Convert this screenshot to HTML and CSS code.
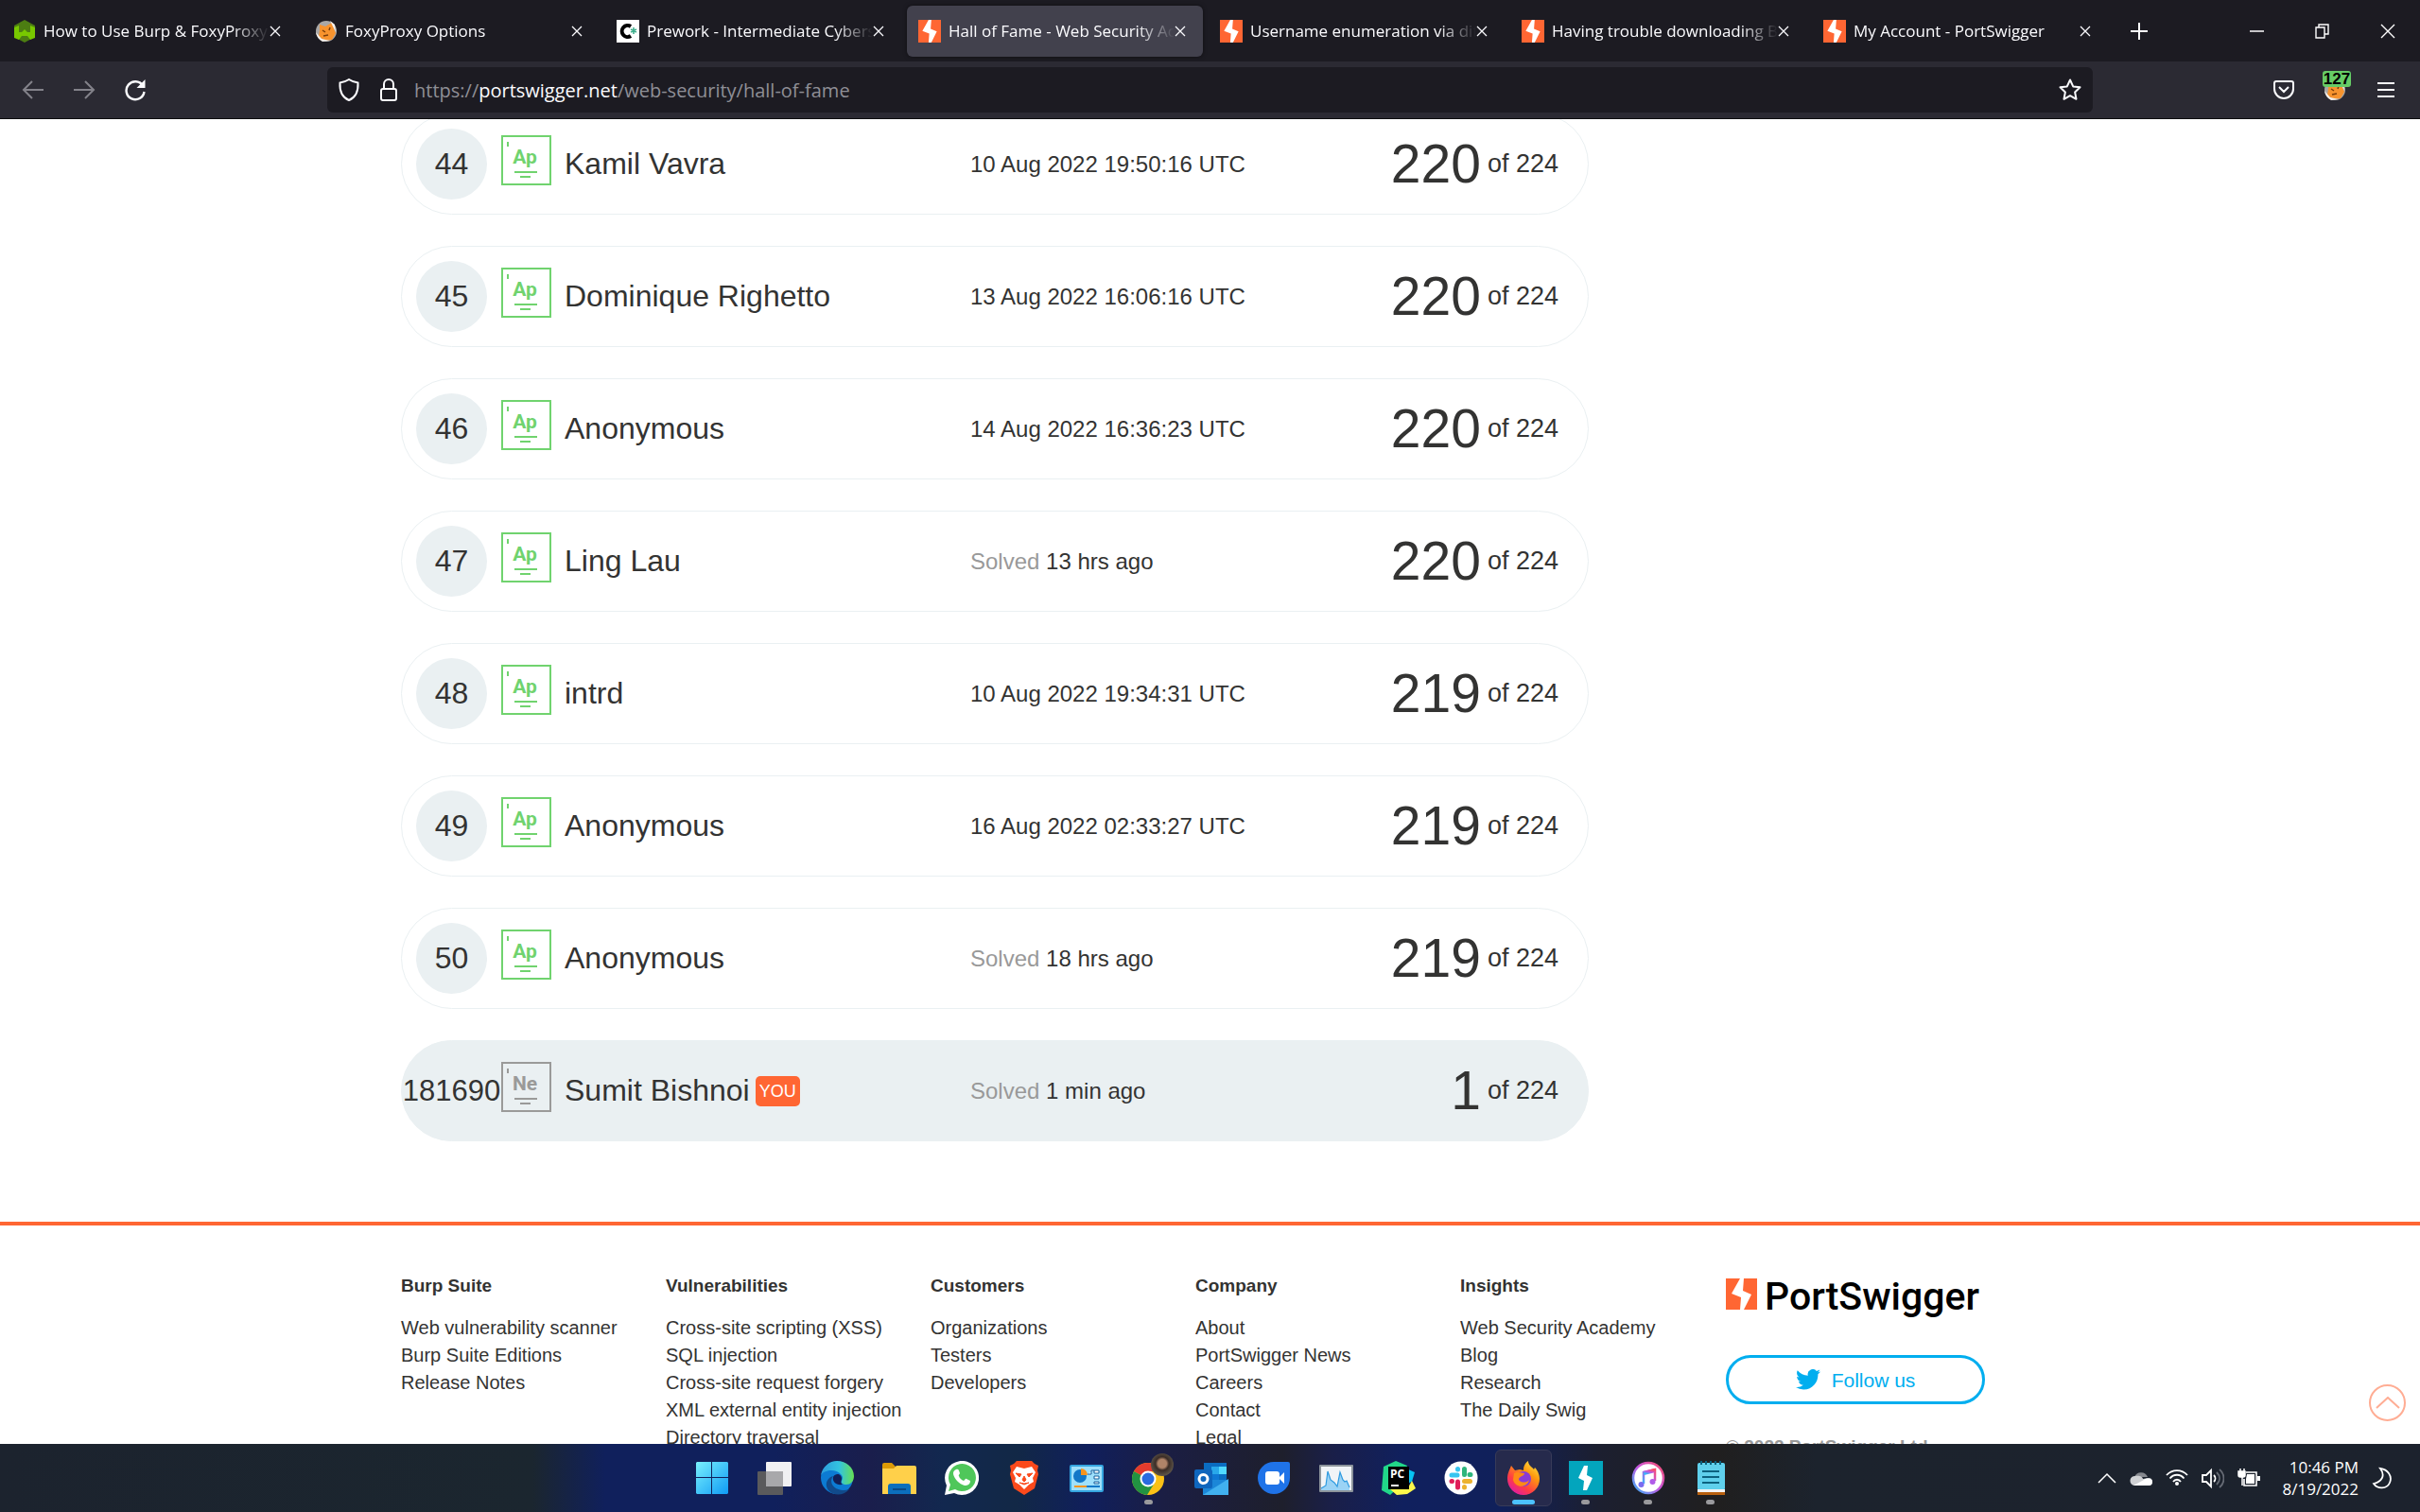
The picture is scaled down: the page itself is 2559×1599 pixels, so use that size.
FILE: index.html
```html
<!DOCTYPE html>
<html lang="en">
<head>
<meta charset="utf-8">
<title>Hall of Fame - Web Security Academy</title>
<meta name="viewport" content="width=device-width, initial-scale=1">
<link rel="stylesheet" href="styles.css">
</head>
<body>
<svg class="defs" aria-hidden="true">
  <symbol id="bolt" viewBox="0 0 33 33"><rect width="33" height="33" fill="#ff6633"/><path d="M15 0h4l-1 13 9 4-8 16h-4l1-13-10-4z" fill="#fff"/></symbol>
  <symbol id="x" viewBox="0 0 12 12"><path d="M1 1l10 10M11 1L1 11" fill="none" stroke="#fbfbfe" stroke-width="1.3"/></symbol>
  <symbol id="fox" viewBox="0 0 24 24"><circle cx="12" cy="12" r="11" fill="#a9a7a6"/><path d="M5 5l6 2 7-4 2 6 2 5-4 7-7 1-7-4 1-7z" fill="#f7932e"/><path d="M16 1l5 4 1 8-2-4zM1 13l6 7 9 2-8 1q-6-3-7-10z" fill="#f5f1ec"/><path d="M8 11l3 2M16 8l-1 3M9 17l5-1" stroke="#7a3d0a" stroke-width="1.5"/></symbol>
  <symbol id="level" viewBox="0 0 53 53"><rect x="1" y="1" width="51" height="51" fill="none" stroke="currentColor" stroke-width="2"/><path d="M7 7v5M14 39h24M20 44h11" stroke="currentColor" stroke-width="2"/></symbol>
</svg>

<header class="browser">
  <div class="tabstrip">
    <div class="tabs">
      <div class="tab"><svg class="fav" viewBox="0 0 24 24"><path d="M12 0l11 6v12l-11 6-11-6V6z" fill="#4c7d12"/><path d="M1 8l5-2v7h3l3-3 3 3h3V6l5 2v11l-5 2-3-4H9l-3 4-5-2z" fill="#78c800"/></svg><span class="tab-label">How to Use Burp &amp; FoxyProxy to</span><button class="tab-x" aria-label="Close tab"><svg><use href="#x"/></svg></button></div>
      <div class="tab"><svg class="fav"><use href="#fox"/></svg><span class="tab-label">FoxyProxy Options</span><button class="tab-x" aria-label="Close tab"><svg><use href="#x"/></svg></button></div>
      <div class="tab"><svg class="fav" viewBox="0 0 24 24"><path d="M0 0h24v24H0z" fill="#fff"/><path d="M15 7a6 6 0 1 0 0 10" fill="none" stroke="#000" stroke-width="4"/><path d="M18 8v7M15 10l6 3M21 10l-6 3" stroke="#3fae8c" stroke-width="1.6"/></svg><span class="tab-label">Prework - Intermediate Cybersecurity</span><button class="tab-x" aria-label="Close tab"><svg><use href="#x"/></svg></button></div>
      <div class="tab active"><svg class="fav"><use href="#bolt"/></svg><span class="tab-label">Hall of Fame - Web Security Academy</span><button class="tab-x" aria-label="Close tab"><svg><use href="#x"/></svg></button></div>
      <div class="tab"><svg class="fav"><use href="#bolt"/></svg><span class="tab-label">Username enumeration via different</span><button class="tab-x" aria-label="Close tab"><svg><use href="#x"/></svg></button></div>
      <div class="tab"><svg class="fav"><use href="#bolt"/></svg><span class="tab-label">Having trouble downloading Burp</span><button class="tab-x" aria-label="Close tab"><svg><use href="#x"/></svg></button></div>
      <div class="tab"><svg class="fav"><use href="#bolt"/></svg><span class="tab-label">My Account - PortSwigger</span><button class="tab-x" aria-label="Close tab"><svg><use href="#x"/></svg></button></div>
    </div>
    <button class="tool" aria-label="New tab"><svg width="20" height="20" viewBox="0 0 20 20"><path d="M10 1v18M1 10h18" stroke="#fbfbfe" stroke-width="2"/></svg></button>
    <div class="window-controls">
      <button class="win" aria-label="Minimize"><svg width="16" height="16" viewBox="0 0 16 16"><path d="M0 8h15" stroke="#fff" stroke-width="1.5"/></svg></button>
      <button class="win" aria-label="Restore"><svg width="16" height="16" viewBox="0 0 16 16"><path d="M1 4h9v11H1zM4 4V1h10v10h-4" fill="none" stroke="#fff" stroke-width="1.4"/></svg></button>
      <button class="win" aria-label="Close"><svg width="16" height="16" viewBox="0 0 16 16"><path d="M1 1l14 14M15 1L1 15" stroke="#fff" stroke-width="1.4"/></svg></button>
    </div>
  </div>
  <div class="toolbar">
    <nav class="nav-buttons">
      <button class="tool dim" aria-label="Back"><svg width="24" height="24" viewBox="0 0 24 24"><path d="M23 12H2M11 3l-9 9 9 9" fill="none" stroke="currentColor" stroke-width="2"/></svg></button>
      <button class="tool dim" aria-label="Forward"><svg width="24" height="24" viewBox="0 0 24 24"><path d="M1 12h21M13 3l9 9-9 9" fill="none" stroke="currentColor" stroke-width="2"/></svg></button>
      <button class="tool" aria-label="Reload"><svg width="24" height="24" viewBox="0 0 24 24"><path d="M20 7.500A9.500 9.500 0 1 0 21.500 14" fill="none" stroke="#fbfbfe" stroke-width="2.400"/><path d="M22.500 1v9h-9z" fill="#fbfbfe"/></svg></button>
    </nav>
    <div class="urlbar">
      <svg width="24" height="26" viewBox="0 0 24 26"><path d="M12 2c3 2 6 3 9.500 3.500C22 14 19 21 12 24 5 21 2 14 2.500 5.500 6 5 9 4 12 2z" fill="none" stroke="#fbfbfe" stroke-width="2"/></svg>
      <svg width="20" height="26" viewBox="0 0 20 26"><path d="M5 12V7a5 5 0 0 1 10 0v5" fill="none" stroke="#fbfbfe" stroke-width="2"/><rect x="2" y="12" width="16" height="12" rx="2" fill="none" stroke="#fbfbfe" stroke-width="2"/></svg>
      <div class="url" role="textbox" aria-label="Address" contenteditable="true" spellcheck="false">https://<span class="host">portswigger.net</span>/web-security/hall-of-fame</div>
      <svg width="26" height="26" viewBox="0 0 26 26"><path d="M13 2.500l3.200 6.900 7.300.9-5.400 5.100 1.400 7.400-6.500-3.600-6.500 3.600 1.400-7.400L2.500 10.300l7.300-.9z" fill="none" stroke="#fbfbfe" stroke-width="2" stroke-linejoin="round"/></svg>
    </div>
    <div class="tools-right">
      <button class="tool" aria-label="Pocket"><svg width="24" height="24" viewBox="0 0 24 24"><path d="M4 3h16a2 2 0 0 1 2 2v6a10 10 0 0 1-20 0V5a2 2 0 0 1 2-2zM7 9l5 5 5-5" fill="none" stroke="#fbfbfe" stroke-width="2"/></svg></button>
      <button class="tool foxy" aria-label="FoxyProxy"><svg width="24" height="24"><use href="#fox"/></svg><span class="count">127</span></button>
      <button class="tool" aria-label="Menu"><svg width="20" height="20" viewBox="0 0 20 20"><path d="M1 3h18M1 10h18M1 17h18" stroke="#fbfbfe" stroke-width="2"/></svg></button>
    </div>
  </div>
</header>

<main class="viewport">
  <div class="container">
    <ol class="board">
      <li class="row"><span class="rank"><span class="disc">44</span></span><span class="badge ap"><svg><use href="#level"/></svg><b>Ap</b></span><span class="name">Kamil Vavra</span><span class="when">10 Aug 2022 19:50:16 UTC</span><span class="score"><strong>220</strong>of 224</span></li>
      <li class="row"><span class="rank"><span class="disc">45</span></span><span class="badge ap"><svg><use href="#level"/></svg><b>Ap</b></span><span class="name">Dominique Righetto</span><span class="when">13 Aug 2022 16:06:16 UTC</span><span class="score"><strong>220</strong>of 224</span></li>
      <li class="row"><span class="rank"><span class="disc">46</span></span><span class="badge ap"><svg><use href="#level"/></svg><b>Ap</b></span><span class="name">Anonymous</span><span class="when">14 Aug 2022 16:36:23 UTC</span><span class="score"><strong>220</strong>of 224</span></li>
      <li class="row"><span class="rank"><span class="disc">47</span></span><span class="badge ap"><svg><use href="#level"/></svg><b>Ap</b></span><span class="name">Ling Lau</span><span class="when"><i>Solved</i> 13 hrs ago</span><span class="score"><strong>220</strong>of 224</span></li>
      <li class="row"><span class="rank"><span class="disc">48</span></span><span class="badge ap"><svg><use href="#level"/></svg><b>Ap</b></span><span class="name">intrd</span><span class="when">10 Aug 2022 19:34:31 UTC</span><span class="score"><strong>219</strong>of 224</span></li>
      <li class="row"><span class="rank"><span class="disc">49</span></span><span class="badge ap"><svg><use href="#level"/></svg><b>Ap</b></span><span class="name">Anonymous</span><span class="when">16 Aug 2022 02:33:27 UTC</span><span class="score"><strong>219</strong>of 224</span></li>
      <li class="row"><span class="rank"><span class="disc">50</span></span><span class="badge ap"><svg><use href="#level"/></svg><b>Ap</b></span><span class="name">Anonymous</span><span class="when"><i>Solved</i> 18 hrs ago</span><span class="score"><strong>219</strong>of 224</span></li>
      <li class="row me"><span class="rank"><span class="disc">181690</span></span><span class="badge ne"><svg><use href="#level"/></svg><b>Ne</b></span><span class="name">Sumit Bishnoi <em>YOU</em></span><span class="when"><i>Solved</i> 1 min ago</span><span class="score"><strong>1</strong>of 224</span></li>
    </ol>
  </div>
  <footer class="footer">
    <div class="container columns">
      <section><h3>Burp Suite</h3><a href="#">Web vulnerability scanner</a><a href="#">Burp Suite Editions</a><a href="#">Release Notes</a></section>
      <section><h3>Vulnerabilities</h3><a href="#">Cross-site scripting (XSS)</a><a href="#">SQL injection</a><a href="#">Cross-site request forgery</a><a href="#">XML external entity injection</a><a href="#">Directory traversal</a></section>
      <section><h3>Customers</h3><a href="#">Organizations</a><a href="#">Testers</a><a href="#">Developers</a></section>
      <section><h3>Company</h3><a href="#">About</a><a href="#">PortSwigger News</a><a href="#">Careers</a><a href="#">Contact</a><a href="#">Legal</a></section>
      <section><h3>Insights</h3><a href="#">Web Security Academy</a><a href="#">Blog</a><a href="#">Research</a><a href="#">The Daily Swig</a></section>
      <section class="brand">
        <div class="logo"><svg width="33" height="33"><use href="#bolt"/></svg><span>PortSwigger</span></div>
        <a class="follow" href="#"><svg width="26" height="22" viewBox="0 0 26 22"><path d="M26 2.600c-1 .5-2 .7-3 .9 1.100-.7 1.900-1.700 2.300-2.900-1 .6-2.200 1-3.400 1.300A5.300 5.300 0 0 0 12.800 6.800C8.400 6.600 4.500 4.500 1.800 1.200c-1.400 2.500-.7 5.600 1.700 7.200-.9 0-1.700-.3-2.400-.7 0 2.600 1.800 4.800 4.200 5.300-.8.200-1.600.2-2.400.1.700 2.100 2.600 3.700 5 3.700A10.700 10.700 0 0 1 0 19 15 15 0 0 0 8.200 21.400c9.900 0 15.500-8.300 15.200-16.100 1-.7 1.900-1.700 2.600-2.700z" fill="#00aeef"/></svg>Follow us</a>
        <p class="copyright">© 2022 PortSwigger Ltd.</p>
      </section>
    </div>
  </footer>
  <button class="to-top" aria-label="Back to top"><svg width="26" height="13" viewBox="0 0 26 13"><path d="M1 12L13 1l12 11" fill="none" stroke="#ffad94" stroke-width="2"/></svg></button>
</main>

<nav class="taskbar">
  <div class="apps">
    <button class="app" aria-label="Start"><svg viewBox="0 0 36 36"><defs><linearGradient id="w" x1="0" y1="0" x2="1" y2="1"><stop offset="0" stop-color="#79f0fd"/><stop offset="1" stop-color="#0f9bf5"/></linearGradient></defs><path d="M2 1h15v16H1V2zM18 1h16l1 1v15H18zM1 18h16v17H2l-1-1zM18 18h17v16l-1 1H18z" fill="url(#w)"/></svg></button>
    <button class="app" aria-label="Task view"><svg viewBox="0 0 36 36"><rect x="9" y="1" width="27" height="26" rx="1" fill="#f0f0f2"/><rect x="0" y="11" width="27" height="25" rx="1" fill="#5a5a5c"/><path d="M9 11h18v16H9z" fill="#a8a8ab"/></svg></button>
    <button class="app" aria-label="Edge"><svg viewBox="0 0 36 36"><defs><linearGradient id="e" x1="0" x2="1"><stop offset="0" stop-color="#2c9bdc"/><stop offset=".55" stop-color="#33c3e0"/><stop offset="1" stop-color="#66e052"/></linearGradient></defs><circle cx="18" cy="18" r="17" fill="#0c7bd3"/><path d="M1 15C3 6 10 0 18 0c10 0 18 7 18 16 0 6-4 9-8 9s-6-2-5-4 2-4-1-7C17 8 5 9 1 15z" fill="url(#e)"/><path d="M14 16c-6 8 3 18 17 14-6 7-16 7-21 2-6-6-3-14 4-16z" fill="#114a8b"/><path d="M14 17c3-5 9-3 9 2 0 2-2 4 1 6-7 1-11-3-10-8z" fill="#122058"/></svg></button>
    <button class="app" aria-label="File Explorer"><svg viewBox="0 0 36 36"><path d="M0 4q0-2 2-2h8l4 4v6H0z" fill="#dc9a06"/><path d="M0 8h12l3-3h19q2 0 2 2v28H0z" fill="#ffd04a"/><path d="M6 35v-8q0-3 3-3h18q3 0 3 3v8z" fill="#0c6fbc"/><path d="M11 30h14" stroke="#0a4a86" stroke-width="2"/></svg></button>
    <button class="app" aria-label="WhatsApp"><svg viewBox="0 0 36 36"><path d="M0 36l2-10A18 18 0 1 1 10 34z" fill="#fff"/><path d="M4 32l2-7a14.500 14.500 0 1 1 5 5z" fill="#4fc75a"/><path d="M12 9c2-1 3 0 4 4 0 1-2 2-1 3 1 3 3 4 5 5 1 0 2-3 3-2l4 2c0 4-3 5-6 5C14 24 9 17 9 13c0-2 1-3 3-4z" fill="#fff"/></svg></button>
    <button class="app" aria-label="Brave"><svg viewBox="0 0 36 36"><path d="M10 0h16l3 3 4 2-1 5 1 4-4 15-11 7-11-7L3 14l1-4-1-5 4-2z" fill="#fb4a1c"/><path d="M10 6l8 2 8-2 4 6-3 6 1 4-5 3-5 5-5-5-5-3 1-4-3-6z" fill="#fff"/><path d="M9 13l6 1-2 3zM27 13l-6 1 2 3zM18 16l2 4-2 2-2-2zM13 23l5 2 5-2-5 1z" stroke="#fb4a1c" fill="#fb4a1c" stroke-width="1"/></svg></button>
    <button class="app" aria-label="Control Panel"><svg viewBox="0 0 36 36"><rect y="4" width="36" height="29" rx="2" fill="#35a6e0"/><rect x="2" y="6" width="32" height="25" fill="#9fe0fb"/><circle cx="11" cy="16" r="7" fill="#1378c8"/><path d="M12 15V8a7 7 0 0 1 7 7z" fill="#f7941d"/><path d="M19 14h4v-4h3M26 10h5v3h-5zM26 16h5v3h-5zM26 22h5v2h-5z" stroke="#155f9c" fill="#fff"/><path d="M5 27h13" stroke="#f7941d" stroke-width="2"/><path d="M18 27h14" stroke="#1378c8" stroke-width="2"/></svg></button>
    <button class="app run" aria-label="Chrome"><svg viewBox="0 0 36 36"><circle cx="17" cy="19" r="17" fill="#fbc116"/><path d="M17 19L2 11a17 17 0 0 1 30 0H17z" fill="#e33b2e"/><path d="M17 19L2 11a17 17 0 0 0 14 25l8-13z" fill="#229342"/><circle cx="17" cy="19" r="8.500" fill="#fff"/><circle cx="17" cy="19" r="6.500" fill="#2a6be0"/></svg><span class="avatar"></span></button>
    <button class="app" aria-label="Outlook"><svg viewBox="0 0 36 36"><path d="M10 2h24v18H10z" fill="#0a6cc0"/><path d="M18 6h8v8h-8z" fill="#28a8ea"/><path d="M26 6h8v8h-8z" fill="#50d9ff"/><path d="M18 14h8v8h-8z" fill="#0e78d4"/><path d="M9 20h27v16H9z" fill="#1b87d8"/><path d="M9 36l27-17v17z" fill="#41b1ef"/><rect y="9" width="19" height="20" rx="2" fill="#0f66bd"/><circle cx="9.500" cy="19" r="4.500" fill="none" stroke="#fff" stroke-width="3"/></svg></button>
    <button class="app" aria-label="Duo"><svg viewBox="0 0 36 36"><path d="M18 1h15q2 0 2 2v15A17 17 0 1 1 18 1z" fill="#1f73e8"/><rect x="9" y="11" width="15" height="14" rx="3" fill="#fff"/><path d="M23 18l6-6v12z" fill="#fff"/></svg></button>
    <button class="app" aria-label="Performance Monitor"><svg viewBox="0 0 36 36"><rect y="4" width="36" height="29" rx="1" fill="#8d959c"/><rect x="2" y="6" width="32" height="25" fill="#f1f4f7"/><path d="M2 29l5-3 2-15 3 9 4 3 3 4 3-15 3 8 2 2 2-1 3 7v3H2z" fill="#9bd3f5"/><path d="M2 29l5-3 2-15 3 9 4 3 3 4 3-15 3 8 2 2 2-1 3 7" fill="none" stroke="#2d9ae0" stroke-width="1.200"/></svg></button>
    <button class="app" aria-label="PyCharm"><svg viewBox="0 0 36 36"><path d="M2 6l13-6 12 5-6 20-12 11-9-5z" fill="#21d789"/><path d="M26 8l9 4-3 10-6 2z" fill="#07c3f2"/><path d="M9 30h18l5-9 4 8-9 6-11 1z" fill="#fcf84a"/><path d="M7 6h22v24H7z" fill="#000"/><path d="M10 26h8" stroke="#fff" stroke-width="2"/><text x="9" y="18" class="pc">PC</text></svg></button>
    <button class="app" aria-label="Slack"><svg viewBox="0 0 36 36"><circle cx="18" cy="18" r="17.500" fill="#fff"/><g fill="none" stroke-width="5" stroke-linecap="round"><path d="M14.500 8.500v.5M8 15h6" stroke="#36c5f0"/><path d="M21.500 8.500v6M27 14.500h1" stroke="#2eb67d"/><path d="M21.500 21.500h6M21.500 27.500v.5" stroke="#ecb22e"/><path d="M14.500 22v6M8 21.500h.5" stroke="#e01e5a"/></g></svg></button>
    <button class="app current" aria-label="Firefox"><svg viewBox="0 0 36 36"><defs><linearGradient id="f" x1="1" y1="0" x2=".3" y2="1"><stop offset="0" stop-color="#fff44f"/><stop offset=".4" stop-color="#ff980e"/><stop offset=".75" stop-color="#ff3b47"/><stop offset="1" stop-color="#e01ea0"/></linearGradient></defs><path d="M5 5l4 5 5-1 4 1c0-5 2-8 5-10 0 5 4 6 6 9l1-2c4 4 5 9 5 12a17 17 0 0 1-34 0c0-6 2-9 4-14z" fill="url(#f)"/><circle cx="18" cy="19" r="8" fill="#8a3bd6"/><path d="M8 13c4-2 8 0 11 0 0 3-5 3-6 6 0 4 8 5 11 1-2 9-15 9-17 0z" fill="#ff8a16"/></svg></button>
    <button class="app run" aria-label="Burp Suite"><svg viewBox="0 0 36 36"><path d="M0 0h36v36H0z" fill="#03a5bd"/><path d="M16 5h4l-1 10 6 3-6 13h-4l1-10-6-3z" fill="#fff"/></svg></button>
    <button class="app run" aria-label="iTunes"><svg viewBox="0 0 36 36"><defs><linearGradient id="m" x1="1" y1="0" x2="0" y2="1"><stop offset="0" stop-color="#fb4f6a"/><stop offset=".5" stop-color="#c255e0"/><stop offset="1" stop-color="#33b8fb"/></linearGradient></defs><circle cx="18" cy="18" r="16" fill="#fff" stroke="url(#m)" stroke-width="2.500"/><path d="M13 24V12l12-3v12" fill="none" stroke="url(#m)" stroke-width="2.500"/><path d="M13 13l12-3" stroke="url(#m)" stroke-width="4"/><circle cx="10.500" cy="25" r="3" fill="#7b6cf0"/><circle cx="22.500" cy="22" r="3" fill="#b05be8"/></svg></button>
    <button class="app run" aria-label="Notepad"><svg viewBox="0 0 36 36"><rect x="4" y="2" width="29" height="29" rx="2" fill="#5fd0ec"/><path d="M4 30h29v3H4z" fill="#f4f4f4"/><path d="M4 33h29v3H4z" fill="#b8600f"/><path d="M9 11h18M9 17h18M9 23h18M8 0v4M13 0v4M18 0v4M23 0v4M28 0v4" stroke="#0c627f" stroke-width="2"/></svg></button>
  </div>
  <div class="tray">
    <svg width="20" height="24" viewBox="0 0 20 24"><path d="M1 17l9-9 9 9" fill="none" stroke="#fff" stroke-width="1.500"/></svg>
    <svg width="24" height="24" viewBox="0 0 24 24"><path d="M5 11a7.500 7.500 0 0 1 14 0z" fill="#85888e"/><path d="M5 20a5 5 0 0 1 1-10c4-1 8 1 8 3l6-1a4 4 0 0 1 0 8z" fill="#cfd1d4"/><path d="M4 20l11-6c4-3 9-1 9 2s-2 4-4 4z" fill="#fff"/></svg>
    <svg width="24" height="24" viewBox="0 0 24 24"><g fill="none" stroke="#fff" stroke-width="1.800"><path d="M1 9c6-6.500 16-6.500 22 0M4.500 12.500c4-5 11-5 15 0M8 16c2-3 6-3 8 0"/></g><circle cx="12" cy="18" r="2" fill="#fff"/></svg>
    <svg width="24" height="24" viewBox="0 0 24 24"><path d="M1 9h4l5-5v17l-5-5H1z" fill="none" stroke="#fff" stroke-width="1.800"/><path d="M13 9c2 2 2 5 0 7" fill="none" stroke="#fff" stroke-width="1.800"/><path d="M16 6c4 4 4 9 0 13M19 3c6 5 6 14 0 19" fill="none" stroke="#666b75" stroke-width="1.800"/></svg>
    <svg width="24" height="24" viewBox="0 0 24 24"><path d="M1 5h7v4q0 2-2 2H3q-2 0-2-2zM3 2v4M7 2v4M5 10v10" fill="#fff" stroke="#fff" stroke-width="1.500"/><path d="M9 6h11v14H7v-7" fill="none" stroke="#fff" stroke-width="1.600"/><path d="M10 8h8v10H9v-5zM21 10h3v5h-3z" fill="#fff"/></svg>
    <time class="clock">10:46 PM<br>8/19/2022</time>
    <svg width="22" height="24" viewBox="0 0 22 24"><path d="M9 2c6 8 1 14-7 16 4 6 14 6 17-1S17 3 9 2z" fill="none" stroke="#fff" stroke-width="1.800"/></svg>
  </div>
</nav>
</body>
</html>
```
FILE: styles.css
```css
*, *::before, *::after { box-sizing: border-box; }

body {
  margin: 0;
  height: 100vh;
  display: flex;
  flex-direction: column;
  overflow: hidden;
  background: #fff;
  color: #333332;
  font-family: "Liberation Sans", Arial, sans-serif;
}

button {
  padding: 0;
  border: 0;
  background: none;
  color: inherit;
  font: inherit;
}

svg { display: block; flex: none; }
.defs { width: 0; height: 0; position: absolute; }

/* Browser chrome */
.browser {
  flex: none;
  background: #2b2a33;
  border-bottom: 1px solid #0c0c0d;
  color: #fbfbfe;
  font-family: "Open Sans", "Noto Sans", sans-serif;
}

.tabstrip {
  display: flex;
  align-items: center;
  gap: 6px;
  height: 65px;
  padding-left: 2px;
  background: #1c1b22;
}

.tabs { display: flex; gap: 6px; }

.tab {
  display: flex;
  align-items: center;
  width: 313px;
  height: 54px;
  padding: 0 18px 0 12px;
  border-radius: 6px;
  font-size: 17px;
}
.tab.active { background: #42414d; box-shadow: 0 0 4px rgba(0, 0, 0, .5); }
.fav { width: 24px; height: 24px; margin-right: 8px; }
.tab-label {
  flex: 1;
  overflow: hidden;
  white-space: nowrap;
  mask-image: linear-gradient(to left, transparent, #000 40px);
}
.tab-x svg { width: 12px; height: 12px; }

.window-controls { display: flex; margin-left: auto; }
.win { display: grid; place-items: center; width: 69px; height: 65px; }

.toolbar {
  display: grid;
  grid-template-columns: 346px 1fr 346px;
  align-items: center;
  height: 60px;
}
.nav-buttons { display: flex; padding-left: 8px; }
.tools-right { display: flex; justify-content: flex-end; padding-right: 9px; }
.tool { display: grid; place-items: center; width: 54px; height: 48px; }
.dim { color: #83828a; }

.urlbar {
  display: flex;
  align-items: center;
  height: 48px;
  padding: 0 11px;
  border-radius: 6px;
  background: #1c1b22;
}
.urlbar svg + svg { margin-left: 20px; }
.url {
  flex: 1;
  margin-left: 17px;
  padding-top: 2px;
  color: #8f8f96;
  font-size: 20px;
  line-height: 30px;
  white-space: nowrap;
}
.host { color: #fbfbfe; }

.foxy { position: relative; }
.count {
  position: absolute;
  top: 4px;
  left: 14px;
  width: 30px;
  border-radius: 3px;
  background: #66cc66;
  color: #000;
  font: bold 17px/17px "Liberation Sans", sans-serif;
}

/* Page area */
.viewport { position: relative; flex: 1; min-height: 0; overflow: hidden; }
.container { max-width: 1711px; margin: 0 auto; }

/* The list is scrolled so its first row is partly out of view */
.board {
  display: grid;
  gap: 33px;
  max-width: 1256px;
  margin: -6px 0 85px;
  padding: 0;
  list-style: none;
}
.row {
  display: grid;
  grid-template-columns: 105px 67px 429px 1fr auto;
  align-items: center;
  height: 107px;
  padding-right: 31px;
  border: 1px solid #eaf0f2;
  border-radius: 54px;
}
.row.me { background: #eaf0f2; }
.rank { display: flex; justify-content: center; }
.disc {
  display: flex;
  align-items: center;
  justify-content: center;
  width: 75px;
  height: 75px;
  border-radius: 50%;
  background: #eaf0f2;
  font-size: 32px;
}
.me .disc { font-size: 31px; }
.badge {
  position: relative;
  width: 53px;
  height: 61px;
  font: 21px/24px Roboto, sans-serif;
}
.badge svg { width: 53px; height: 53px; }
.badge b { position: absolute; top: 11px; left: 0; right: 3px; text-align: center; }
.ap { color: #70d36e; }
.ne { color: #9a9a99; }
.name { display: flex; align-items: center; gap: 6px; font-size: 32px; }
.name em {
  padding: 0 4px;
  border-radius: 5px;
  background: #ff6633;
  color: #fff;
  font-size: 18px;
  font-style: normal;
  line-height: 32px;
}
.when { font-size: 24px; }
.when i { color: #999; font-style: normal; }
.score { display: flex; align-items: center; gap: 7px; font-size: 27px; }
.score strong { padding-bottom: 2px; font-size: 57px; font-weight: 400; line-height: 64px; }

/* Footer */
.footer { border-top: 4px solid #ff6633; padding-top: 49px; }
.columns { display: grid; grid-template-columns: repeat(5, 280px) 275px; }
.columns { font-size: 20px; line-height: 29px; }
.columns h3 { margin: 0 0 16px; font-size: 19px; line-height: 29px; }
.columns a { display: block; color: inherit; text-decoration: none; }
.brand { padding-left: 1px; }
.logo {
  display: flex;
  gap: 8px;
  height: 59px;
  margin-top: 7px;
  color: #000;
  font: 500 41px/38px Roboto, sans-serif;
}
.columns .follow {
  display: flex;
  align-items: center;
  justify-content: center;
  gap: 12px;
  height: 52px;
  margin-top: 22px;
  border: 3px solid #00aeef;
  border-radius: 26px;
  color: #00aeef;
  font-size: 21px;
}
.copyright { margin: 30px 0 0; color: #999; font-size: 19px; font-weight: 700; }

.to-top {
  position: absolute;
  right: 15px;
  bottom: 24px;
  display: grid;
  place-items: center;
  width: 39px;
  height: 39px;
  border: 2px solid #ffad94;
  border-radius: 50%;
}

/* Taskbar */
.taskbar {
  flex: none;
  display: grid;
  grid-template-columns: 1fr auto 1fr;
  align-items: center;
  height: 72px;
  padding-left: 2px;
  background: linear-gradient(to right, #1c232e 0%, #1b262f 22%, #10205c 25%, #10205c 32%, #1a1e4c 36%, #12284f 39%, #122846 42%, #101f5c 45%, #1b1e44 48%, #1e1f2c 53%, #1a1f48 55%, #10205e 58%, #10205a 62%, #1c1f30 66%, #201f1f 71%, #1c232d 75%, #1c222d 100%);
  color: #fff;
}
.apps { grid-column: 2; display: flex; gap: 6px; }
.app {
  position: relative;
  display: grid;
  place-items: center;
  width: 60px;
  height: 60px;
  border: 1px solid transparent;
  border-radius: 6px;
}
.app > svg { width: 36px; height: 36px; }
.app.run::after, .app.current::after {
  content: "";
  position: absolute;
  bottom: 1px;
  left: 50%;
  width: 9px;
  height: 5px;
  margin-left: -5px;
  border-radius: 3px;
  background: #9a9a9d;
}
.app.current { border-color: #383b58; background: #262a4c; }
.app.current::after { width: 24px; margin-left: -12px; background: #4cc2ff; }
.avatar {
  position: absolute;
  top: 3px;
  right: 3px;
  width: 24px;
  height: 24px;
  border-radius: 50%;
  background: radial-gradient(circle at 50% 45%, #b08468 0 25%, #3a2c26 40%, #5b5348 70%, #28241f);
}
.pc { fill: #fff; font: bold 12px "Open Sans", sans-serif; }

.tray { display: flex; align-items: center; justify-content: flex-end; gap: 14px; padding-right: 29px; }
.clock {
  width: 90px;
  font: 17px/23px "Open Sans", sans-serif;
  text-align: right;
}
```
